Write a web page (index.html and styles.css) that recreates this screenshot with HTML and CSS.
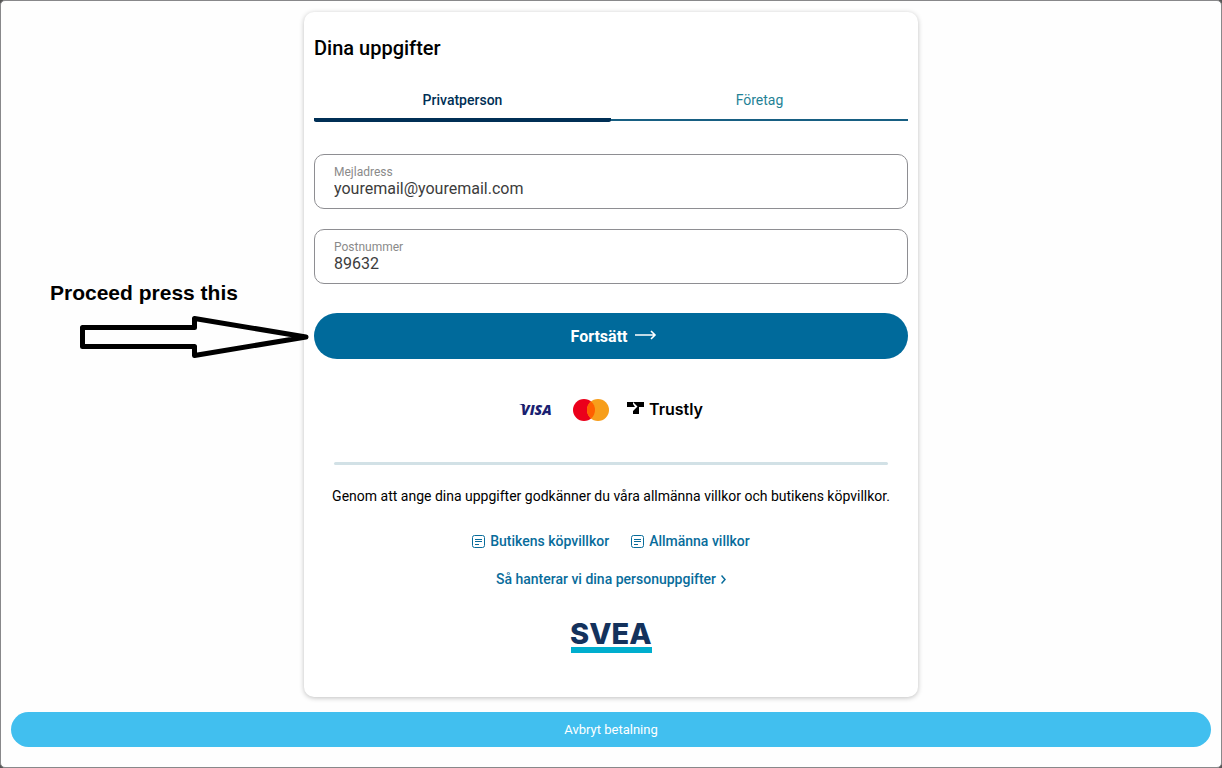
FILE: index.html
```
<!DOCTYPE html>
<html lang="sv">
<head>
    <meta charset="utf-8">
    <title>Dina uppgifter</title>
    <link rel="stylesheet" href="styles.css">
</head>
<body>
    <div class="page">
        <main class="card">
            <h1>Dina uppgifter</h1>
            <div class="tabs" role="tablist">
                <button type="button" class="tab active" role="tab" aria-selected="true">Privatperson</button>
                <button type="button" class="tab" role="tab" aria-selected="false">Företag</button>
            </div>

            <form class="form">
                <div class="field">
                    <label for="email">Mejladress</label>
                    <input type="email" id="email" value="youremail@youremail.com">
                </div>
                <div class="field">
                    <label for="zip">Postnummer</label>
                    <input type="text" id="zip" value="89632">
                </div>
                <div class="submit-row">
                    <button type="submit" class="submit">
                        Fortsätt
                        <svg width="22" height="12" viewBox="0 0 22 12" fill="none" stroke="currentColor" stroke-width="1.6"><path d="M0 5h20M16 1l4 4-4 4"/></svg>
                    </button>
                    <div class="hint">
                        <span>Proceed press this</span>
                        <svg width="230" height="44" viewBox="0 0 230 44" fill="none" stroke="#000" stroke-width="5" stroke-linejoin="round"><path d="M2.500 12.500H114.500V3.500L226 22 114.500 40.500V31.500H2.500z"/></svg>
                    </div>
                </div>
            </form>

            <div class="payments">
                <svg width="36" height="22" viewBox="0 0 36 22" role="img" aria-label="Visa">
                    <text x="2" y="16" class="visa">VISA</text>
                    <path d="M0 5h5l1.500 2.500z" fill="#1a1f71"/>
                </svg>
                <svg width="36" height="22" viewBox="0 0 36 22" role="img" aria-label="Mastercard">
                    <circle cx="11" cy="11" r="11" fill="#eb001b"/>
                    <circle cx="25" cy="11" r="11" fill="#f79e1b"/>
                    <path d="M18 2.500a11 11 0 0 1 0 17 11 11 0 0 1 0-17z" fill="#ff5f00"/>
                </svg>
                <div class="trustly">
                    <svg width="17" height="14" viewBox="0 0 17 14"><path d="M0 1h17v5h-5v7H6V6H0z" fill="#000"/><path d="M6 1l4.500 4.500L6 10V6h2L6 3z" fill="#fff"/></svg>
                    <span>Trustly</span>
                </div>
            </div>

            <hr>
            <p class="terms">Genom att ange dina uppgifter godkänner du våra allmänna villkor och butikens köpvillkor.</p>
            <div class="links">
                <a href="#">
                    <svg width="13" height="13" viewBox="0 0 13 13" fill="none" stroke="currentColor"><rect x=".5" y=".5" width="12" height="12" rx="2"/><path d="M3 4.500h7M3 6.500h7M3 9.500h4"/></svg>
                    Butikens köpvillkor
                </a>
                <a href="#">
                    <svg width="13" height="13" viewBox="0 0 13 13" fill="none" stroke="currentColor"><rect x=".5" y=".5" width="12" height="12" rx="2"/><path d="M3 4.500h7M3 6.500h7M3 9.500h4"/></svg>
                    Allmänna villkor
                </a>
            </div>
            <div class="links">
                <a href="#">
                    Så hanterar vi dina personuppgifter
                    <svg width="5" height="9" viewBox="0 0 5 9" fill="none" stroke="currentColor" stroke-width="1.500"><path d="M.5.5l3.500 4-3.500 4"/></svg>
                </a>
            </div>

            <svg class="svea" width="84" height="40" viewBox="0 0 84 40" role="img" aria-label="Svea">
                <text x="1" y="31">SVEA</text>
                <rect x="2" y="34" width="81" height="6" fill="#00aece"/>
            </svg>
        </main>
        <button type="button" class="cancel">Avbryt betalning</button>
    </div>
</body>
</html>
```
FILE: styles.css
```
* {
    box-sizing: border-box;
}

body {
    margin: 0;
    background-color: #555555;
    font-family: Roboto, sans-serif;
    font-size: 14px;
    line-height: 20px;
    color: #000000;
}

button,
input {
    font-family: inherit;
}

.page {
    min-height: 100vh;
    padding: 11px 10px 20px;
    border: 1px solid #88888a;
    border-radius: 5px;
    background-color: #fefefe;
}

.card {
    max-width: 614px;
    margin: 0 auto 15px;
    padding: 22px 10px 44px;
    border-radius: 10px;
    background-color: #ffffff;
    box-shadow: 0 1px 5px rgba(0, 0, 0, 0.25);
}

h1 {
    margin: 0 0 26px;
    font-size: 20px;
    line-height: 28px;
    font-weight: 500;
}

.tabs {
    display: flex;
    height: 34px;
    background: linear-gradient(#175f82, #175f82) 0 31px / 100% 2px no-repeat;
}

.tab {
    flex: 1;
    padding: 0 0 10px;
    border: 0;
    background: none;
    color: #1f8296;
    font-size: 14px;
    line-height: 20px;
}

.tab.active {
    padding-bottom: 6px;
    border-bottom: 4px solid #002f55;
    border-radius: 2px;
    color: #002f55;
    font-weight: 500;
}

.form {
    margin-top: 32px;
}

.field {
    height: 55px;
    margin-bottom: 20px;
    padding: 10px 19px;
    border: 1px solid #8e8e92;
    border-radius: 10px;
}

.field label {
    display: block;
    color: #8a8a8a;
    font-size: 12px;
    line-height: 14px;
}

.field input {
    display: block;
    width: 100%;
    height: 18px;
    padding: 0;
    border: 0;
    outline: 0;
    background: none;
    color: #3c3c3c;
    font-size: 16px;
}

.submit-row {
    position: relative;
    margin-top: 29px;
}

.submit {
    display: flex;
    align-items: center;
    justify-content: center;
    gap: 8px;
    width: 100%;
    height: 46px;
    padding: 0 0 0 6px;
    border: 0;
    border-radius: 23px;
    background-color: #006a9b;
    color: #ffffff;
    font-size: 16px;
    font-weight: 700;
}

/* callout that points at the button */
.hint {
    position: absolute;
    right: 100%;
    bottom: 0;
    display: flex;
    flex-direction: column;
    width: 264px;
    font: bold 21px/24px "Liberation Sans", Arial, sans-serif;
}

.hint svg {
    margin: 10px 4px 0 30px;
}

.payments {
    display: flex;
    align-items: center;
    justify-content: center;
    gap: 18px;
    height: 22px;
    margin: 40px 0 41px;
}

.visa {
    font: italic 800 14px "Open Sans", sans-serif;
    fill: #1a1f71;
}

.trustly {
    display: flex;
    gap: 5px;
    padding-bottom: 3px;
    font: 600 16px/16px Inter, sans-serif;
}

hr {
    height: 3px;
    margin: 0 20px 21px;
    border: 0;
    border-radius: 2px;
    background-color: #d2e1e6;
}

.terms {
    margin: 0 0 25px;
    text-align: center;
}

.links {
    display: flex;
    justify-content: center;
    gap: 22px;
    margin-bottom: 18px;
}

.links a {
    display: flex;
    align-items: center;
    gap: 5px;
    color: #086c9b;
    font-weight: 500;
    text-decoration: none;
}

.svea {
    display: block;
    margin: 24px auto 0;
}

.svea text {
    font: 800 29px Inter, sans-serif;
    fill: #14325c;
}

.cancel {
    display: block;
    width: 100%;
    height: 35px;
    border: 0;
    border-radius: 18px;
    background-color: #41bfef;
    color: #ffffff;
    font-size: 13px;
}
```
